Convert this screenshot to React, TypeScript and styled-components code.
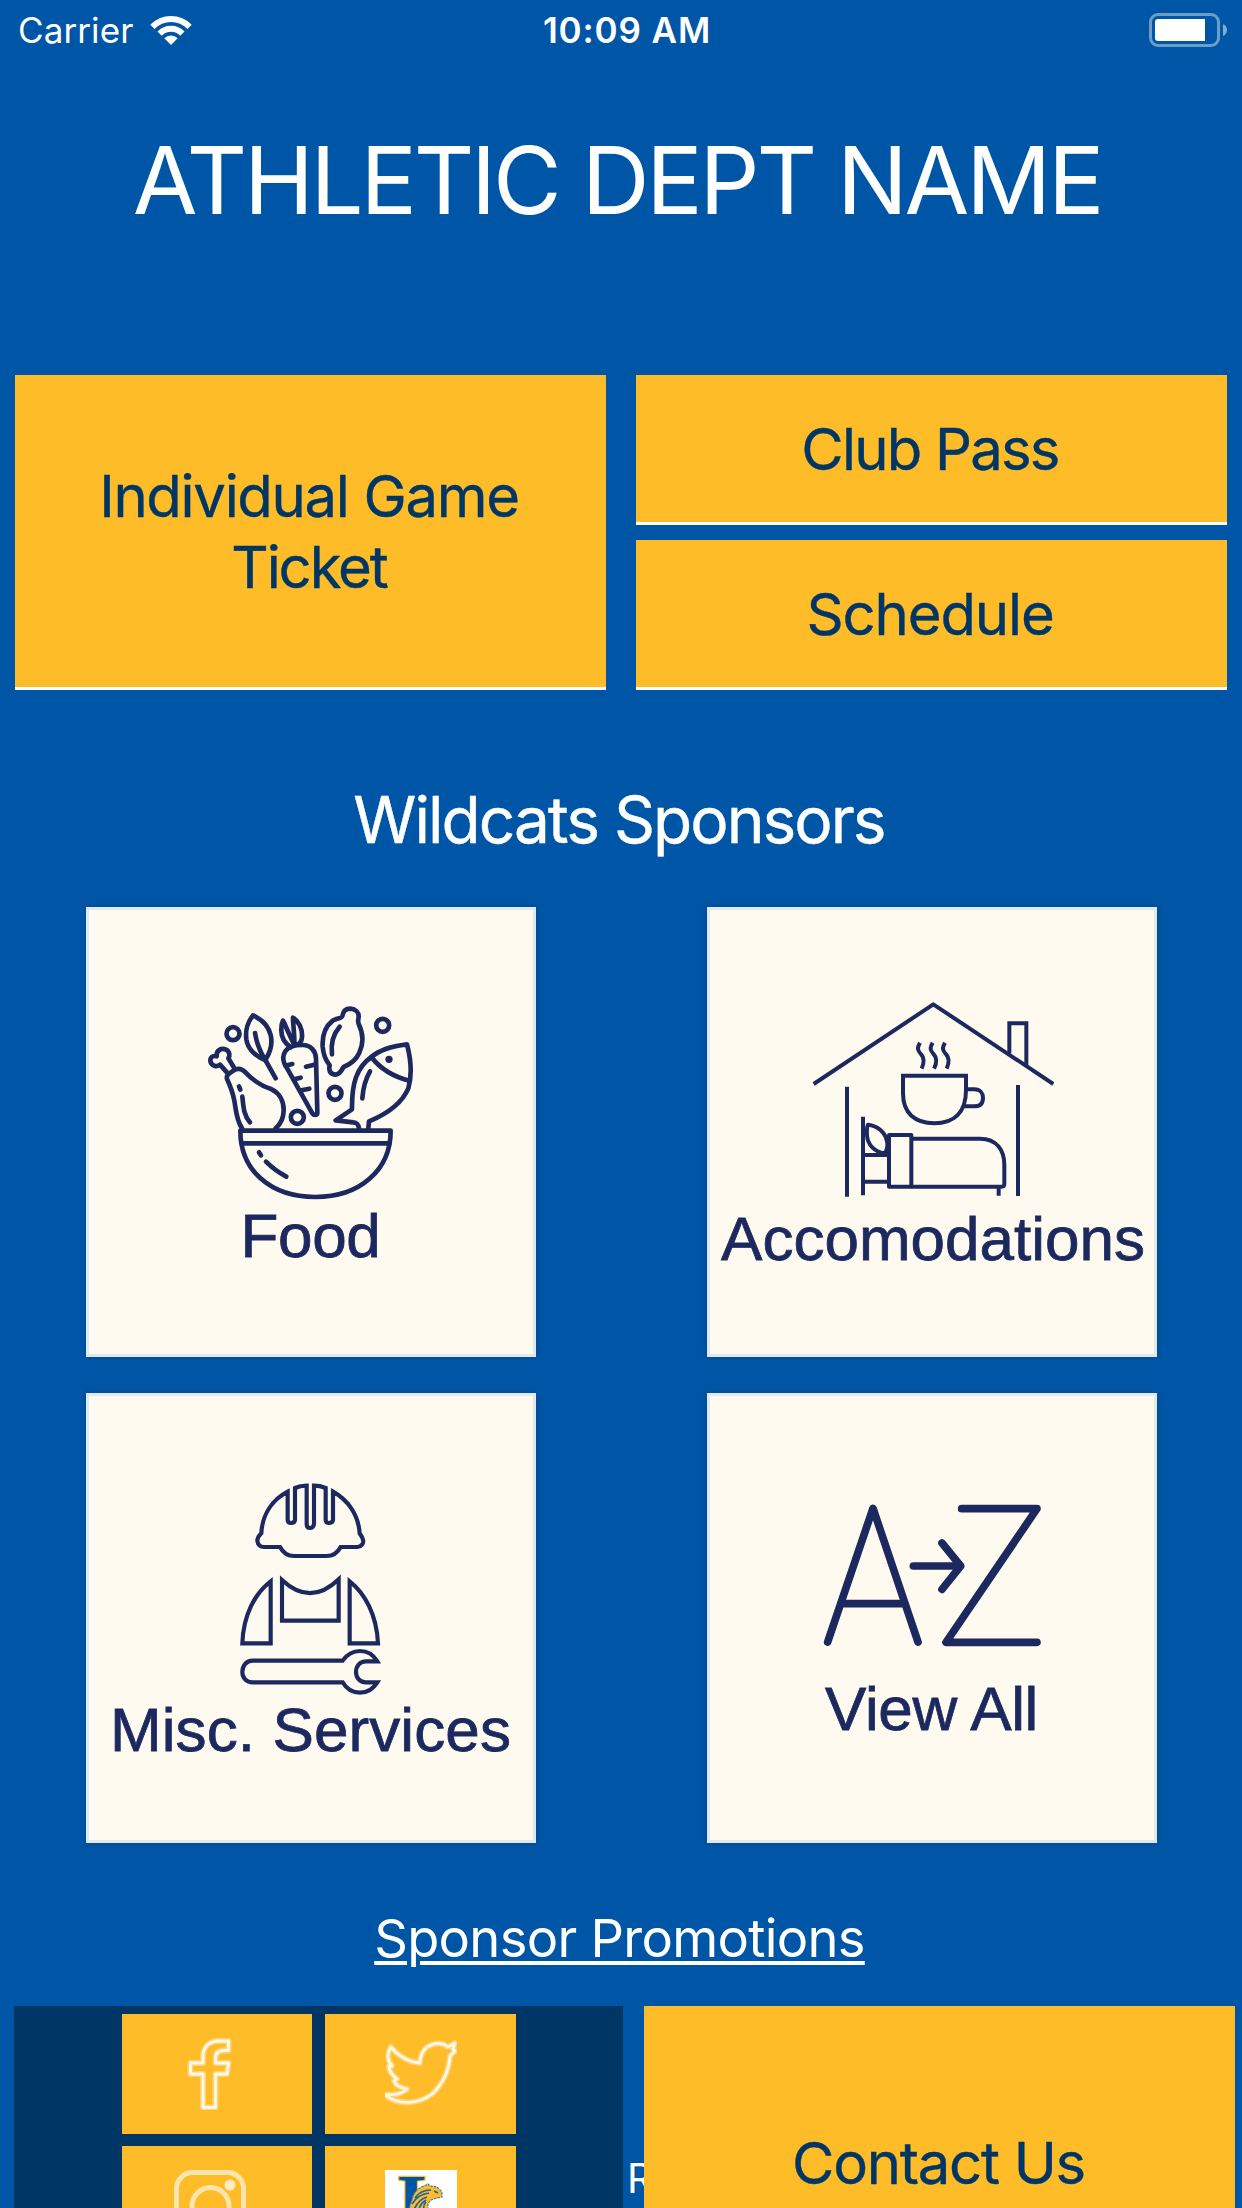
import React from "react";
import styled, { createGlobalStyle } from "styled-components";

const color = {
  blue: "#0056a6",
  navy: "#003665",
  gold: "#ffbc29",
  cream: "#fffaef",
  tileEdge: "#e1e8ee",
  ink: "#1c295f",
};

const GlobalStyle = createGlobalStyle`
  *, *::before, *::after { box-sizing: border-box; }
  body { margin: 0; background: ${color.blue}; }
  h1, h2, p { margin: 0; font-weight: 400; }
`;

const Screen = styled.div`
  display: flex;
  flex-direction: column;
  width: 1242px;
  height: 2208px;
  overflow: hidden;
  background: ${color.blue};
  color: #fff;
  font-family: Inter, "Liberation Sans", sans-serif;
`;

const StatusBar = styled.header`
  flex: none;
  display: grid;
  grid-template-columns: 1fr auto 1fr;
  align-items: center;
  height: 60px;
  padding: 0 15px 0 18px;
  font-size: 35px;
  line-height: 60px;
`;

const Carrier = styled.div`
  display: flex;
  align-items: center;
  gap: 17px;
  letter-spacing: 0.1px;
`;

const Clock = styled.div`
  padding: 0 0 0 9px;
  font-weight: 600;
  letter-spacing: 0.88px;
`;

const BatterySlot = styled.div`
  display: flex;
  justify-content: flex-end;
`;

const Title = styled.h1`
  flex: none;
  height: 240px;
  padding-right: 8px;
  text-align: center;
  font-size: 94px;
  line-height: 240px;
  letter-spacing: -3.24px;
  white-space: nowrap;
`;

const Actions = styled.nav`
  flex: none;
  display: grid;
  grid-template-columns: 1fr 1fr;
  grid-template-rows: 150px 150px;
  gap: 15px 30px;
  margin-top: 75px;
  padding: 0 15px;
`;

const ActionButton = styled.button<{ $tall?: boolean; $spacing?: number }>`
  grid-row: ${(p) => (p.$tall ? "span 2" : "auto")};
  display: flex;
  align-items: center;
  justify-content: center;
  padding: 2px 83px 0 80px;
  border: 0;
  border-bottom: 3px solid #fff;
  background: ${color.gold};
  color: ${color.navy};
  font: 400 58px/71.5px Inter, "Liberation Sans", sans-serif;
  letter-spacing: ${(p) => p.$spacing ?? -1.3}px;
  text-align: center;
  -webkit-text-stroke: 0.4px ${color.navy};
`;

const ActionLine = styled.span<{ $spacing?: number }>`
  display: block;
  white-space: nowrap;
  letter-spacing: ${(p) => (p.$spacing ? `${p.$spacing}px` : "inherit")};
`;

const SectionTitle = styled.h2`
  flex: none;
  height: 217px;
  padding: 42px 4px 0 0;
  text-align: center;
  font-size: 64px;
  line-height: 175px;
  letter-spacing: -1.98px;
  -webkit-text-stroke: 0.4px #fff;
`;

const SponsorGrid = styled.div`
  flex: none;
  display: grid;
  grid-template-columns: 1fr 1fr;
  grid-auto-rows: 450px;
  row-gap: 36px;
  justify-items: center;
`;

const Tile = styled.div<{ $top: number }>`
  display: flex;
  flex-direction: column;
  align-items: center;
  width: 450px;
  padding-top: ${(p) => p.$top}px;
  border: 3px solid ${color.tileEdge};
  background: ${color.cream};
  color: ${color.ink};
  box-shadow: 0 0 6px rgba(0, 40, 90, 0.3);

  svg {
    flex: none;
    display: block;
  }
`;

const TileLabel = styled.p<{ $gap: number; $spacing?: number; $indent?: number }>`
  margin-top: ${(p) => p.$gap}px;
  padding-left: ${(p) => p.$indent ?? 0}px;
  font-family: "Liberation Sans", Arial, sans-serif;
  font-size: 62px;
  line-height: 70px;
  letter-spacing: ${(p) => p.$spacing ?? 0}px;
  white-space: nowrap;
  -webkit-text-stroke: 0.8px ${color.ink};
`;

const PromoRow = styled.div`
  flex: none;
  height: 163px;
  padding: 27px 3px 0 0;
  text-align: center;
  line-height: 136px;
`;

const PromoLink = styled.a`
  color: #fff;
  font-size: 52.5px;
  letter-spacing: -0.72px;
  text-decoration: underline;
  text-decoration-thickness: 4px;
  text-underline-offset: 4px;
`;

const Footer = styled.footer`
  flex: none;
  display: flex;
  height: 314px;
  padding: 0 7px 0 14px;
`;

const SocialPanel = styled.div`
  flex: none;
  display: grid;
  grid-template-columns: 190px 191px;
  grid-auto-rows: 120px;
  gap: 12px 13px;
  justify-content: start;
  width: 609px;
  padding: 8px 0 0 108px;
  background: ${color.navy};
`;

const SocialButton = styled.button<{ $shift?: number }>`
  display: flex;
  align-items: center;
  justify-content: center;
  padding: 0 ${(p) => p.$shift ?? 0}px 0 0;
  border: 0;
  background: ${color.gold};
`;

const ClippedText = styled.div`
  flex: none;
  width: 21px;
  padding-left: 4px;
  overflow: hidden;
  white-space: nowrap;
  font-size: 40.5px;
  line-height: 345px;
`;

const ContactButton = styled.button`
  flex: 1;
  border: 0;
  padding: 2px 2px 0 0;
  background: ${color.gold};
  color: ${color.navy};
  font: 400 58px/71.5px Inter, "Liberation Sans", sans-serif;
  letter-spacing: -1.26px;
  -webkit-text-stroke: 0.4px ${color.navy};
`;

const line = {
  fill: "none",
  stroke: color.ink,
  strokeLinecap: "round",
  strokeLinejoin: "round",
} as const;

const WifiIcon = () => (
  <svg width="42" height="30" viewBox="0 0 42 30" fill="none" stroke="#fff" strokeWidth="6">
    <path d="M2.4 11.8A25.8 25.8 0 0 1 39.6 11.8" />
    <path d="M9.6 18.7A15.8 15.8 0 0 1 32.4 18.7" />
    <path d="M21 30L14.3 23.2A9.5 9.5 0 0 1 27.7 23.2Z" fill="#fff" stroke="none" />
  </svg>
);

const BatteryIcon = () => (
  <svg width="78" height="34" viewBox="0 0 78 34">
    <rect x="1.5" y="1.5" width="68" height="31" rx="7.5" fill="none" stroke="#fff" strokeOpacity="0.42" strokeWidth="3" />
    <path d="M9 6H56V28H9Q6 28 6 25V9Q6 6 9 6Z" fill="#fff" />
    <path d="M74 11Q78 13 78 17T74 23Z" fill="#fff" fillOpacity="0.5" />
  </svg>
);

const FoodIcon = () => (
  <svg width="208" height="195" viewBox="81 75 624 585" {...line} strokeWidth="14">
    <path d="M181 452H632C632 570 540 651 406 651C270 651 181 570 181 452Z" />
    <path d="M186 490H628" />
    <path d="M237 517L243 526M258 545Q285 572 319 590" />
    <circle cx="159" cy="161" r="19.5" />
    <circle cx="608" cy="136" r="19.5" />
    <circle cx="465" cy="340" r="19.5" />
    <circle cx="352" cy="412" r="19.5" />
    <path d="M219 106C200 130 196 150 199 178C203 205 225 228 256 240C272 215 278 190 272 165C266 140 245 118 219 106Z" />
    <path d="M225 159C230 190 240 215 256 240L287 295" />
    <path d="M144 281L120 254C112 262 92 258 91 242C91 230 100 226 110 229C108 210 125 203 138 209C150 215 150 228 145 235L164 266" />
    <path d="M186 445C168 418 168 388 163 362C158 335 148 312 141 297C138 286 146 282 160 272C172 264 184 265 194 275C220 303 245 318 275 328C300 340 311 365 311 390C311 412 302 432 287 445" />
    <path d="M177 319L181 329M187 350C190 375 190 405 210 427" />
    <path d="M313 250C308 238 309 225 316 214C325 200 345 195 368 195C392 195 407 212 408 235L412 398C412 406 402 407 397 400Z" />
    <path d="M332 202C315 190 303 170 304 148C304 138 306 128 309 122C318 140 328 165 343 194C344 165 339 135 339 113C355 122 368 145 366 172C365 183 360 190 352 194" />
    <path d="M316 257L337 252M378 260L403 254M343 298L362 293M365 331L388 326" />
    <path d="M487 108C490 90 500 86 511 86C528 88 536 98 536 108C536 118 532 122 536 132C552 165 549 195 538 218C528 240 510 253 491 261C484 268 484 283 465 284C448 282 446 268 449 256C440 245 430 225 428 200C426 165 438 138 458 122C470 114 485 116 487 108Z" />
    <path d="M479 140C460 162 452 190 456 223" />
    <path d="M565 445L567 424C620 402 665 372 685 325C698 280 692 235 681 193C640 198 600 208 574 231C530 262 515 310 516 388L467 421L520 427C532 428 535 434 537 445" />
    <path d="M574 231C600 265 640 290 688 302" />
    <path d="M570 274C555 300 549 325 547 355" />
    <circle cx="627" cy="238" r="11" fill={color.ink} stroke="none" />
  </svg>
);

const LodgingIcon = () => (
  <svg width="244" height="200" viewBox="90 60 732 600" {...line} strokeWidth="12" strokeLinecap="butt">
    <path d="M101 312L460 73L820 312" />
    <path d="M688 220V130H739V256" strokeLinejoin="miter" />
    <path d="M201 320V650M714 315V648M249 410V646M656 620V647" />
    <path d="M420 188C410 205 413 212 424 224C435 236 432 250 425 266" />
    <path d="M458 188C448 205 451 212 462 224C473 236 470 250 462 266" />
    <path d="M495 188C485 205 488 212 499 224C510 236 507 250 500 266" />
    <path d="M369 287H558V330C558 400 520 430 463 430C405 430 369 400 369 340Z" strokeLinejoin="miter" />
    <path d="M558 328H583C600 328 609 340 609 353C609 370 600 379 583 379H553" />
    <path d="M264 434C290 437 318 455 322 490C323 505 318 515 313 520C285 515 262 495 261 465C260 450 261 440 264 434Z" />
    <path d="M249 525H326M249 605H326" />
    <path d="M327 465H394V620H327Z" />
    <path d="M394 476H600C650 476 673 510 673 555V612Q673 620 665 620H394" />
  </svg>
);

const ServicesIcon = () => (
  <svg width="146" height="215" viewBox="114 63 438 645" {...line} strokeWidth="12.5" strokeLinejoin="miter">
    <path d="M263 95C220 118 187 160 184 220C173 230 172 240 172 243C174 255 182 261 192 261H240C250 280 265 288 282 288H380C400 288 412 280 422 261H472C484 261 490 250 490 243C489 235 487 230 479 220C475 160 440 118 399 95V180Q397 189 387 189Q377 189 377 180V84Q360 77 342 77V192Q340 204 330 204Q320 204 320 192V77Q300 77 285 84V180Q283 189 274 189Q263 189 263 180Z" />
    <path d="M212 364C165 400 130 465 127 550H212Z" />
    <path d="M246 360Q332 440 416 358V482H246Z" />
    <path d="M449 364C495 400 530 465 534 550H449Z" />
    <path d="M428 602H158C138 602 127 618 127 636C127 655 140 667 158 667H428C440 688 460 698 480 698C503 698 520 686 532 667H498C478 667 468 652 468 636C468 618 480 604 498 604H532C520 584 503 573 480 573C460 573 442 582 428 602Z" />
  </svg>
);

const AlphabetIcon = () => (
  <svg width="222" height="146" viewBox="93 96 666 438" {...line} strokeWidth="23">
    <path d="M113 516L249 115L384 516M160 401H338" />
    <path d="M370 288H512M456 219L512 288L456 358" />
    <path d="M515 116H741L468 517H741" />
  </svg>
);

const GlowOutline = ({ d }: { d: string }) => (
  <svg width="72" height="72" viewBox="0 0 72 72" fill="none" stroke="#fff" strokeLinejoin="round">
    <path d={d} strokeWidth="6" strokeOpacity="0.35" />
    <path d={d} strokeWidth="2.8" strokeOpacity="0.85" />
  </svg>
);

const FacebookIcon = () => (
  <GlowOutline d="M29 69.5V36H16.500V25H29V19C29 9 35 3 45 3H54.500V12.5H49C43 13 41.5 16 41.5 20V25H54.500L53 36H41.5V69.5Z" />
);

const TwitterIcon = () => (
  <GlowOutline d="M0 57C13 67 33 67 47 56C59 45 64 32 65 18L70 13L68 11L70 5L63 9C57 4 49 5 42 9C36 14 35 20 35 25C23 24 12 17 6 9C2 15 2 22 7 28L4 28C4 34 8 38 12 41L9 43C11 48 16 50 22 51C18 56 10 57 0 57Z" />
);

const InstagramIcon = () => (
  <svg width="72" height="72" viewBox="0 0 72 72" fill="none" stroke="#fff">
    <rect x="2.5" y="2.5" width="67" height="67" rx="16" strokeWidth="5" strokeOpacity="0.62" />
    <circle cx="36.5" cy="36" r="18.5" strokeWidth="5" strokeOpacity="0.62" />
    <circle cx="56" cy="15" r="5.5" fill="#fff" fillOpacity="0.7" stroke="none" />
  </svg>
);

const TeamLogo = () => (
  <svg width="72" height="72" viewBox="0 0 72 72">
    <rect width="72" height="72" fill="#fff" />
    <text
      x="13"
      y="56"
      fontFamily="Liberation Serif, serif"
      fontWeight="700"
      fontSize="74"
      fill={color.blue}
      stroke={color.gold}
      strokeWidth="2.4"
      paintOrder="stroke"
    >
      L
    </text>
    <path
      d="M25 62C23 50 23 38 27 30C28 23 33 18 39 16L43 14L45 16L52 17L57 22L57 27L52 28L49 29C44 30 41 35 44 40C47 44 51 44 53 48C48 62 36 68 25 62Z"
      fill={color.gold}
      stroke="#3a7aa8"
      strokeWidth="1.2"
      strokeDasharray="2.5 1"
    />
    <path
      d="M27 34C31 27 37 24 44 23M29 41C31 34 35 29 42 27M33 46C33 38 36 33 41 30M30 28C34 22 40 20 46 20M49 21L53 23M39 40C38 36 39 34 41 32M26 48C27 42 29 39 31 36"
      fill="none"
      stroke="#1f62a0"
      strokeWidth="1.7"
    />
  </svg>
);

export default function App() {
  return (
    <>
      <GlobalStyle />
      <Screen>
        <StatusBar>
          <Carrier>
            Carrier
            <WifiIcon />
          </Carrier>
          <Clock>10:09 AM</Clock>
          <BatterySlot>
            <BatteryIcon />
          </BatterySlot>
        </StatusBar>

        <Title>ATHLETIC DEPT NAME</Title>

        <Actions>
          <ActionButton $tall>
            <span>
              <ActionLine>Individual Game</ActionLine>
              <ActionLine $spacing={-2.1}>Ticket</ActionLine>
            </span>
          </ActionButton>
          <ActionButton $spacing={-1.78}>Club Pass</ActionButton>
          <ActionButton $spacing={-1.12}>Schedule</ActionButton>
        </Actions>

        <SectionTitle>Wildcats Sponsors</SectionTitle>

        <SponsorGrid>
          <Tile $top={95}>
            <FoodIcon />
            <TileLabel $gap={1} $spacing={-0.3}>
              Food
            </TileLabel>
          </Tile>
          <Tile $top={90}>
            <LodgingIcon />
            <TileLabel $gap={4} $indent={3}>
              Accomodations
            </TileLabel>
          </Tile>
          <Tile $top={85}>
            <ServicesIcon />
            <TileLabel $gap={-1} $spacing={0.1}>
              Misc. Services
            </TileLabel>
          </Tile>
          <Tile $top={106}>
            <AlphabetIcon />
            <TileLabel $gap={26} $spacing={-0.4}>
              View All
            </TileLabel>
          </Tile>
        </SponsorGrid>

        <PromoRow>
          <PromoLink>Sponsor Promotions</PromoLink>
        </PromoRow>

        <Footer>
          <SocialPanel>
            <SocialButton $shift={14} aria-label="Facebook">
              <FacebookIcon />
            </SocialButton>
            <SocialButton aria-label="Twitter">
              <TwitterIcon />
            </SocialButton>
            <SocialButton $shift={14} aria-label="Instagram">
              <InstagramIcon />
            </SocialButton>
            <SocialButton aria-label="Team site">
              <TeamLogo />
            </SocialButton>
          </SocialPanel>
          <ClippedText>R</ClippedText>
          <ContactButton>Contact Us</ContactButton>
        </Footer>
      </Screen>
    </>
  );
}
